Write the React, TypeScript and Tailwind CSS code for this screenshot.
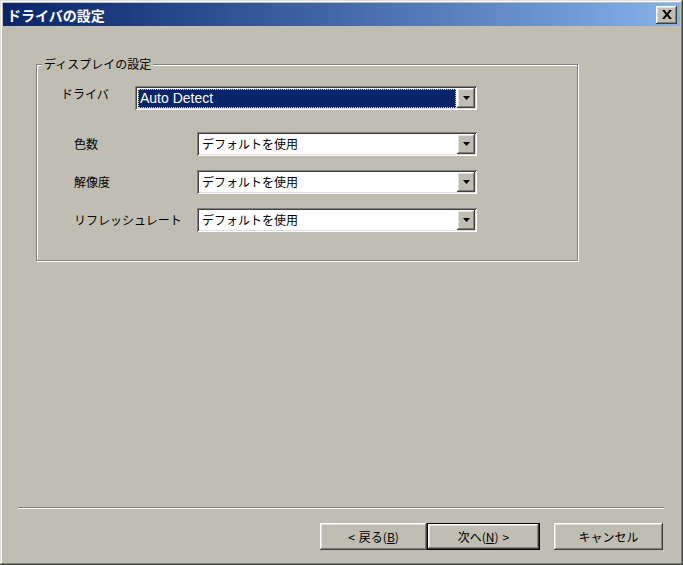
const jp = { fontFamily: '"Noto Sans CJK JP", "Liberation Sans", sans-serif' };

const raised =
  "shadow-[inset_-1px_-1px_#404040,inset_1px_1px_#ffffff,inset_-2px_-2px_#808080,inset_2px_2px_#dfdfdf]";
const sunken =
  "shadow-[inset_1px_1px_#808080,inset_-1px_-1px_#ffffff,inset_2px_2px_#404040,inset_-2px_-2px_#dfdfdf]";

function Arrow() {
  return (
    <svg width="7" height="4" viewBox="0 0 7 4">
      <path d="M0 0H7L3.5 4Z" fill="#000" />
    </svg>
  );
}

function Combo({ value, selected, width }: { value: string; selected?: boolean; width: string }) {
  return (
    <div className={`${width} h-[24px] flex p-[2px] bg-white ${sunken}`}>
      <div className="flex-1 flex items-center min-w-0 px-[1px]">
        {selected ? (
          <div className="w-full h-[19px] flex items-center bg-[#0a246a] outline outline-1 outline-dotted outline-[#d8cf8c] -outline-offset-1 px-[2px] text-white text-[14px] leading-none" style={{ fontFamily: '"Liberation Sans", sans-serif' }}>
            {value}
          </div>
        ) : (
          <span className="pl-[2px] text-[12px] leading-none text-black">{value}</span>
        )}
      </div>
      <div className={`w-[18px] h-full flex items-center justify-center bg-[#c0bdb2] ${raised}`}>
        <Arrow />
      </div>
    </div>
  );
}

function Row({ label, top }: { label: string; top: string }) {
  return (
    <div className={`flex items-center h-[24px] ${top}`}>
      <span className="w-[160px] pl-[37px] text-[12px] text-black">{label}</span>
      <Combo value="デフォルトを使用" width="w-[280px]" />
    </div>
  );
}

function Button({ children, width, isDefault }: { children: React.ReactNode; width: string; isDefault?: boolean }) {
  return (
    <div className={`${width} h-[27px] ${isDefault ? "border border-black" : ""}`}>
      <div className={`w-full h-full flex items-center justify-center gap-[4px] bg-[#c0bdb2] text-[12px] text-black ${raised}`}>
        {children}
      </div>
    </div>
  );
}

export default function App() {
  return (
    <div
      className="w-[683px] h-[565px] flex flex-col p-[3px] bg-[#c0bdb2] shadow-[inset_-1px_-1px_#404040,inset_1px_1px_#dfdfdf,inset_-2px_-2px_#808080,inset_2px_2px_#ffffff]"
      style={jp}
    >
      {/* Title bar */}
      <div className="h-[23px] flex items-center justify-between bg-gradient-to-r from-[#0a246a] to-[#86b2ea] pl-[4px] pr-[3px]">
        <span className="text-white font-bold text-[14px] leading-none">ドライバの設定</span>
        <div className={`w-[21px] h-[18px] flex items-center justify-center bg-[#c0bdb2] ${raised}`}>
          <svg width="10" height="9" viewBox="0 0 10 9">
            <path d="M0 0H2.6L5 3 7.4 0H10L6.4 4.5 10 9H7.4L5 6 2.6 9H0L3.6 4.5Z" fill="#000" />
          </svg>
        </div>
      </div>

      {/* Group box */}
      <div className="relative ml-[33px] mt-[38px] w-[542px] h-[197px] border border-[#808080] shadow-[inset_1px_1px_#ffffff,1px_1px_#ffffff] pt-[21px]">
        <span className="absolute -top-[9px] left-[5px] px-[2px] bg-[#c0bdb2] text-[12px] leading-[16px] text-black">
          ディスプレイの設定
        </span>
        <div className="flex items-center h-[24px]">
          <span className="w-[98px] pl-[24px] pb-[8px] text-[12px] text-black">ドライバ</span>
          <Combo value="Auto Detect" selected width="w-[342px]" />
        </div>
        <Row label="色数" top="mt-[22px]" />
        <Row label="解像度" top="mt-[14px]" />
        <Row label="リフレッシュレート" top="mt-[14px]" />
      </div>

      <div className="flex-1" />

      {/* Separator */}
      <div className="ml-[15px] w-[646px] h-[2px] border-t border-[#808080] border-b border-b-white" />

      {/* Buttons */}
      <div className="flex mt-[14px] mb-[12px] ml-[317px]">
        <Button width="w-[107px]">
          <span>&lt;</span>
          <span>
            戻る(<span className="underline">B</span>)
          </span>
        </Button>
        <Button width="w-[113px]" isDefault>
          <span>
            次へ(<span className="underline">N</span>)
          </span>
          <span>&gt;</span>
        </Button>
        <div className="w-[14px]" />
        <Button width="w-[109px]">キャンセル</Button>
      </div>
    </div>
  );
}
